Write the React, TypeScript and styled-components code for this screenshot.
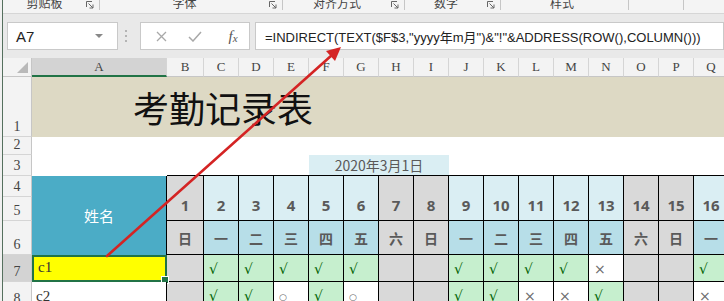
import React from 'react';
import styled, { createGlobalStyle, css } from 'styled-components';

const GlobalStyle = createGlobalStyle`
    html, body {
        margin: 0;
        padding: 0;
        background: #f0f0f0;
        overflow: hidden;
    }
`;

type Place = { $c: number; $r: number; $cs?: number; $rs?: number };

const place = css<Place>`
    grid-column: ${(p) => p.$c} / span ${(p) => p.$cs ?? 1};
    grid-row: ${(p) => p.$r} / span ${(p) => p.$rs ?? 1};
    box-sizing: border-box;
`;

const Window = styled.div`
    position: relative;
    width: 724px;
    height: 301px;
    overflow: hidden;
    padding-left: 2px;
    box-sizing: border-box;
    background: #f0f0f0;
    font-family: 'Noto Sans CJK SC', sans-serif;
`;

const Frame = styled.div`
    height: 100%;
    border-left: 1px solid #55705e;
    overflow: hidden;
`;

const Ribbon = styled.div`
    display: flex;
    height: 14px;
    background: #f4f4f4;
    border-bottom: 1px solid #d6d6d6;
    box-sizing: border-box;
    overflow: hidden;
`;

const Group = styled.div<{ $w: number; $edge?: boolean }>`
    flex: 0 0 ${(p) => p.$w}px;
    display: flex;
    align-items: flex-start;
    padding-right: 6px;
    box-sizing: border-box;
    position: relative;

    &::after {
        content: '';
        position: absolute;
        right: 0;
        top: 0;
        height: 10px;
        border-right: ${(p) => (p.$edge ? '1px solid #c6c6c6' : 'none')};
    }
`;

const GroupLabel = styled.span`
    flex: 1;
    text-align: center;
    font-size: 12px;
    line-height: 12px;
    margin-top: -3px;
    color: #444;
`;

const Launcher = styled.svg`
    width: 8px;
    height: 8px;
    margin-top: 1px;
`;

const FormulaArea = styled.div`
    display: flex;
    align-items: center;
    height: 44px;
    padding-left: 4px;
    background: #e9e9e9;
    box-sizing: border-box;
`;

const InputBox = styled.div`
    height: 28px;
    background: #fff;
    border: 1px solid #c9c9c9;
    box-sizing: border-box;
    display: flex;
    align-items: center;
`;

const NameBox = styled(InputBox)`
    flex: 0 0 111px;
    justify-content: space-between;
    padding: 0 14px 0 8px;
    font: 15px 'Liberation Sans', sans-serif;
    color: #222;
`;

const DropArrow = styled.span`
    width: 0;
    height: 0;
    border-left: 4px solid transparent;
    border-right: 4px solid transparent;
    border-top: 4px solid #888;
`;

const Grip = styled.div`
    flex: 0 0 22px;
    padding-right: 7px;
    box-sizing: border-box;
    display: flex;
    flex-direction: column;
    align-items: center;
    gap: 3px;

    span {
        width: 2px;
        height: 2px;
        background: #b4b4b4;
    }
`;

const ActionBox = styled(InputBox)`
    flex: 0 0 108px;
    display: grid;
    grid-template-columns: 40px 28px 40px;
    justify-items: center;
`;

const Fx = styled.span`
    padding-left: 8px;
    font: italic 15px 'Liberation Serif', serif;
    color: #555;

    sub {
        font-size: 11px;
        vertical-align: -1px;
    }
`;

const FormulaInput = styled(InputBox)`
    flex: 1;
    margin-left: 5px;
    padding-left: 9px;
    font: 13px 'Liberation Sans', 'Noto Sans CJK SC', sans-serif;
    color: #222;
    white-space: nowrap;
`;

const Sheet = styled.div`
    display: grid;
    grid-template-columns: 29px 135px 37px repeat(15, 35px);
    grid-template-rows: 19px 60px 18px 21px 21px 24px 34px 27px 27px;
    background: #fff;
`;

const Corner = styled.div<Place>`
    ${place}
    position: relative;
    background: #f3f3f3;
    border-right: 1px solid #c6c6c6;
    border-bottom: 1px solid #c6c6c6;

    &::after {
        content: '';
        position: absolute;
        right: 3px;
        bottom: 3px;
        width: 11px;
        height: 11px;
        background: #b9b9b9;
        clip-path: polygon(100% 0, 100% 100%, 0 100%);
    }
`;

const ColHeader = styled.div<Place & { $active?: boolean }>`
    ${place}
    display: flex;
    align-items: center;
    justify-content: center;
    background: ${(p) => (p.$active ? '#d3d3d3' : '#f3f3f3')};
    border-right: 1px solid #d5d5d5;
    border-bottom: ${(p) => (p.$active ? '2px solid #217346' : '1px solid #c6c6c6')};
    font: 13px 'Liberation Serif', serif;
    color: #444;
`;

const RowHeader = styled.div<Place & { $active?: boolean }>`
    ${place}
    display: flex;
    align-items: flex-end;
    justify-content: center;
    padding-bottom: 1px;
    background: ${(p) => (p.$active ? '#d3d3d3' : '#f3f3f3')};
    border-right: 1px solid #c6c6c6;
    border-bottom: 1px solid #d5d5d5;
    font: 14px 'Liberation Serif', serif;
    line-height: 16px;
    color: #444;
`;

const TitleCell = styled.div<Place>`
    ${place}
    display: flex;
    align-items: center;
    padding-left: 101px;
    background: #ddd9c4;
    font-size: 36px;
    color: #111;
`;

const Blank = styled.div<Place & { $edge?: boolean }>`
    ${place}
    border-bottom: ${(p) => (p.$edge ? '1px solid #000' : 'none')};
`;

const DateCell = styled.div<Place>`
    ${place}
    display: flex;
    align-items: center;
    justify-content: center;
    background: #daeef3;
    border-bottom: 1px solid #000;
    font-size: 14px;
    color: #595959;
`;

const NameHeader = styled.div<Place>`
    ${place}
    display: flex;
    align-items: center;
    justify-content: center;
    background: #4bacc6;
    border-right: 1px solid #000;
    font-size: 15px;
    color: #fff;
`;

const DayCell = styled.div<Place & { $off: boolean; $kind: 'num' | 'week' }>`
    ${place}
    display: flex;
    justify-content: center;
    align-items: ${(p) => (p.$kind === 'num' ? 'flex-end' : 'center')};
    padding-bottom: ${(p) => (p.$kind === 'num' ? '5px' : '0')};
    background: ${(p) => (p.$off ? '#d9d9d9' : p.$kind === 'num' ? '#daeef3' : '#b7dee8')};
    border-right: 1px solid #000;
    border-bottom: 1px solid #000;
    font-family: ${(p) => (p.$kind === 'num' ? "'Noto Sans', sans-serif" : "'Noto Sans CJK SC', sans-serif")};
    font-size: ${(p) => (p.$kind === 'num' ? '15px' : '14px')};
    font-weight: 700;
    color: #5a5a5a;
`;

type Mark = 'ok' | 'no' | 'half';

const MarkCell = styled.div<Place & { $off: boolean; $mark?: Mark }>`
    ${place}
    display: flex;
    align-items: center;
    padding-left: 5px;
    background: ${(p) => (p.$off ? '#d9d9d9' : p.$mark === 'ok' ? '#c6efce' : '#fff')};
    border-right: 1px solid #000;
    border-bottom: 1px solid #000;
    font-family: 'DejaVu Sans', sans-serif;
    font-size: ${(p) => (p.$mark === 'half' ? '9px' : '14px')};
    color: ${(p) => (p.$mark === 'ok' ? '#006100' : '#6b6b6b')};
    padding-top: ${(p) => (p.$mark === 'half' ? '4px' : '1px')};
`;

const NameCell = styled.div<Place & { $selected?: boolean }>`
    ${place}
    position: relative;
    display: flex;
    align-items: flex-end;
    padding: 0 0 4px 4px;
    background: ${(p) => (p.$selected ? '#ffff00' : '#fff')};
    border: ${(p) => (p.$selected ? '2px solid #217346' : 'none')};
    border-right: ${(p) => (p.$selected ? '2px solid #217346' : '1px solid #000')};
    font: 15px 'Liberation Serif', serif;
    color: #333;

    &::after {
        content: '';
        display: ${(p) => (p.$selected ? 'block' : 'none')};
        position: absolute;
        right: -4px;
        bottom: -4px;
        width: 6px;
        height: 6px;
        background: #217346;
        border: 1px solid #fff;
    }
`;

const Arrow = styled.svg`
    position: absolute;
    left: 0;
    top: 0;
    width: 724px;
    height: 301px;
    pointer-events: none;
`;

const COLS = 'ABCDEFGHIJKLMNOPQ'.split('');
const WEEK = ['日', '一', '二', '三', '四', '五', '六'];
const DAYS = Array.from({ length: 16 }, (_, i) => i + 1);
const isOff = (d: number) => {
    const w = (d - 1) % 7;
    return w === 0 || w === 6;
};

const people: { name: string; marks: (Mark | null)[] }[] = [
    {
        name: 'c1',
        marks: [null, 'ok', 'ok', 'ok', 'ok', 'ok', null, null, 'ok', 'ok', 'ok', 'ok', 'no', null, null, 'ok']
    },
    {
        name: 'c2',
        marks: [null, 'ok', 'ok', 'half', 'ok', 'half', null, null, 'ok', 'ok', 'no', 'no', 'ok', null, null, 'no']
    }
];

const glyph: Record<Mark, string> = { ok: '√', no: '×', half: '○' };

const ribbonGroups = [
    { w: 97, label: '剪贴板', launcher: true },
    { w: 183, label: '字体', launcher: true },
    { w: 122, label: '对齐方式', launcher: true },
    { w: 96, label: '数字', launcher: true },
    { w: 128, label: '样式', launcher: false },
    { w: 55, label: '', launcher: false },
    { w: 60, label: '', launcher: false }
];

const LauncherIcon = () => (
    <Launcher viewBox="0 0 8 8" fill="none" stroke="#666" strokeWidth="1">
        <path d="M0.5 6V0.5H6" />
        <path d="M2.5 2.5L7 7M7 3.5V7H3.5" />
    </Launcher>
);

export default function App() {
    return (
        <Window>
            <GlobalStyle />
            <Frame>
                <Ribbon>
                    {ribbonGroups.map((g, i) => (
                        <Group key={i} $w={g.w} $edge={i < 6}>
                            <GroupLabel>{g.label}</GroupLabel>
                            {g.launcher && <LauncherIcon />}
                        </Group>
                    ))}
                </Ribbon>

                <FormulaArea>
                    <NameBox>
                        A7
                        <DropArrow />
                    </NameBox>
                    <Grip>
                        <span />
                        <span />
                        <span />
                    </Grip>
                    <ActionBox>
                        <svg width="11" height="11" viewBox="0 0 11 11" stroke="#a8a8a8" strokeWidth="1.3">
                            <path d="M1 1L10 10M10 1L1 10" />
                        </svg>
                        <svg width="14" height="11" viewBox="0 0 14 11" fill="none" stroke="#a8a8a8" strokeWidth="1.5">
                            <path d="M1 6L5 10L13 1" />
                        </svg>
                        <Fx>
                            f<sub>x</sub>
                        </Fx>
                    </ActionBox>
                    <FormulaInput>=INDIRECT(TEXT($F$3,"yyyy年m月")&amp;"!"&amp;ADDRESS(ROW(),COLUMN()))</FormulaInput>
                </FormulaArea>

                <Sheet>
                    <Corner $c={1} $r={1} />
                    {COLS.map((c, i) => (
                        <ColHeader key={c} $c={i + 2} $r={1} $active={c === 'A'}>
                            {c}
                        </ColHeader>
                    ))}
                    {[1, 2, 3, 4, 5, 6, 7, 8].map((n) => (
                        <RowHeader key={n} $c={1} $r={n + 1} $active={n === 7}>
                            {n}
                        </RowHeader>
                    ))}

                    <TitleCell $c={2} $r={2} $cs={17}>
                        考勤记录表
                    </TitleCell>
                    <Blank $c={2} $r={3} $cs={17} />

                    <Blank $c={2} $r={4} />
                    <Blank $c={3} $r={4} $cs={4} $edge />
                    <DateCell $c={7} $r={4} $cs={4}>
                        2020年3月1日
                    </DateCell>
                    <Blank $c={11} $r={4} $cs={8} $edge />

                    <NameHeader $c={2} $r={5} $rs={3}>
                        姓名
                    </NameHeader>
                    {DAYS.map((d, i) => (
                        <DayCell key={`n${d}`} $c={i + 3} $r={5} $rs={2} $off={isOff(d)} $kind="num">
                            {d}
                        </DayCell>
                    ))}
                    {DAYS.map((d, i) => (
                        <DayCell key={`w${d}`} $c={i + 3} $r={7} $off={isOff(d)} $kind="week">
                            {WEEK[(d - 1) % 7]}
                        </DayCell>
                    ))}

                    {people.map((p, row) => (
                        <React.Fragment key={p.name}>
                            <NameCell $c={2} $r={row + 8} $selected={row === 0}>
                                {p.name}
                            </NameCell>
                            {p.marks.map((m, i) => (
                                <MarkCell key={i} $c={i + 3} $r={row + 8} $off={isOff(i + 1)} $mark={m ?? undefined}>
                                    {m ? glyph[m] : ''}
                                </MarkCell>
                            ))}
                        </React.Fragment>
                    ))}
                </Sheet>
            </Frame>

            <Arrow viewBox="0 0 724 301">
                <line x1="107" y1="256" x2="332" y2="55" stroke="#d42424" strokeWidth="2.6" strokeLinecap="round" />
                <polygon points="341,47 335,61 326,51" fill="#d42424" />
            </Arrow>
        </Window>
    );
}
